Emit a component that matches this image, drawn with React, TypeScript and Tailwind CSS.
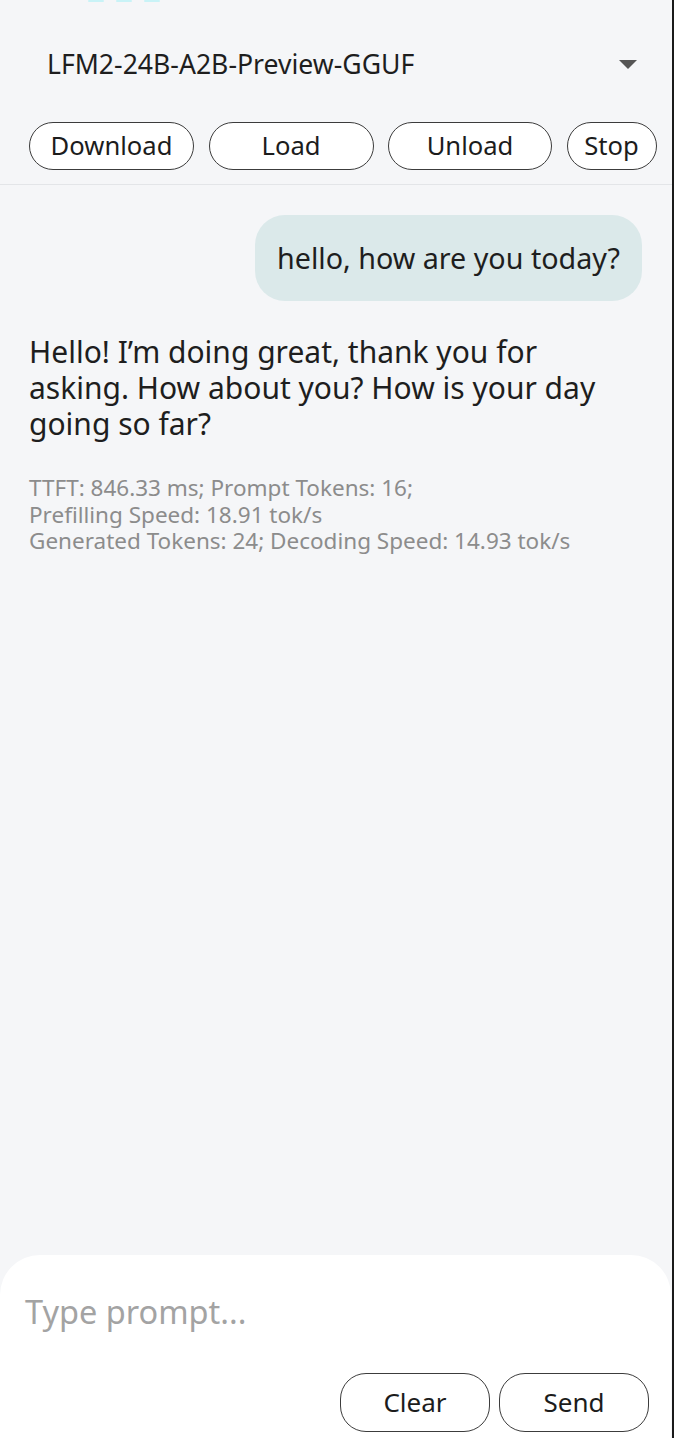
const FONT = { fontFamily: "'Noto Sans', Roboto, sans-serif" }

const topButtons = [
  { label: "Download", w: "w-[165px]" },
  { label: "Load", w: "w-[165px]" },
  { label: "Unload", w: "w-[164px]" },
  { label: "Stop", w: "w-[90px]" },
]

function PillButton({ label, className }: { label: string; className: string }) {
  return (
    <button
      className={`${className} flex items-center justify-center bg-white border-[1.5px] border-[#3c3c3c] text-[#1c1c1c]`}
    >
      {label}
    </button>
  )
}

export default function App() {
  return (
    <div
      style={FONT}
      className="relative w-full h-[1438px] flex flex-col bg-[#f5f6f8] border-r-2 border-[#1a1a1a] overflow-hidden"
    >
      {/* status bar remnant */}
      <div className="h-[3px] flex pl-[88px] gap-[12px]">
        <span className="w-[16px] h-[2px] rounded-full bg-[#c9f3f7]" />
        <span className="w-[16px] h-[2px] rounded-full bg-[#c9f3f7]" />
        <span className="w-[16px] h-[2px] rounded-full bg-[#c9f3f7]" />
      </div>

      {/* model selector */}
      <div className="mt-[40px] h-[44px] flex items-center justify-between pl-[47px] pr-[35px]">
        <span className="text-[26.6px] text-[#1e1e1e]">LFM2-24B-A2B-Preview-GGUF</span>
        <svg width="18" height="10" viewBox="0 0 18 10">
          <path d="M0 0 H18 L9 9 Z" fill="#555" />
        </svg>
      </div>

      {/* actions */}
      <div className="mt-[35px] flex gap-[14.5px] pl-[29px]">
        {topButtons.map((b) => (
          <PillButton key={b.label} label={b.label} className={`${b.w} h-[48px] rounded-full text-[25.6px]`} />
        ))}
      </div>

      <div className="mt-[14px] h-px bg-[#e3e5e8]" />

      {/* chat */}
      <div className="flex-1 flex flex-col px-[29px] pt-[30px]">
        <div className="self-end mr-[1px] h-[86px] flex items-center px-[22px] rounded-[30px] bg-[#dbe9ea] text-[28.7px] text-[#1e1e1e]">
          hello, how are you today?
        </div>

        <p className="mt-[33px] pr-[22px] text-[30px] leading-[36px] text-[#1e1e1e]">
          Hello! I’m doing great, thank you for asking. How about you? How is your day going so far?
        </p>

        <p className="mt-[33px] text-[22.5px] leading-[26.5px] text-[#8c8c8c]">
          TTFT: 846.33 ms; Prompt Tokens: 16;
          <br />
          Prefilling Speed: 18.91 tok/s
          <br />
          Generated Tokens: 24; Decoding Speed: 14.93 tok/s
        </p>
      </div>

      {/* composer */}
      <div className="h-[183px] mr-[1px] bg-white rounded-t-[40px] flex flex-col">
        <div className="mt-[36px] pl-[25px] h-[42px] flex items-center text-[32.5px] text-[#a3a3a3]">
          Type prompt...
        </div>
        <div className="mt-auto mb-[6px] flex justify-end gap-[9px] pr-[22px]">
          <PillButton label="Clear" className="w-[150px] h-[59px] rounded-[26px] text-[26px]" />
          <PillButton label="Send" className="w-[150px] h-[59px] rounded-[26px] text-[26px]" />
        </div>
      </div>
    </div>
  )
}
